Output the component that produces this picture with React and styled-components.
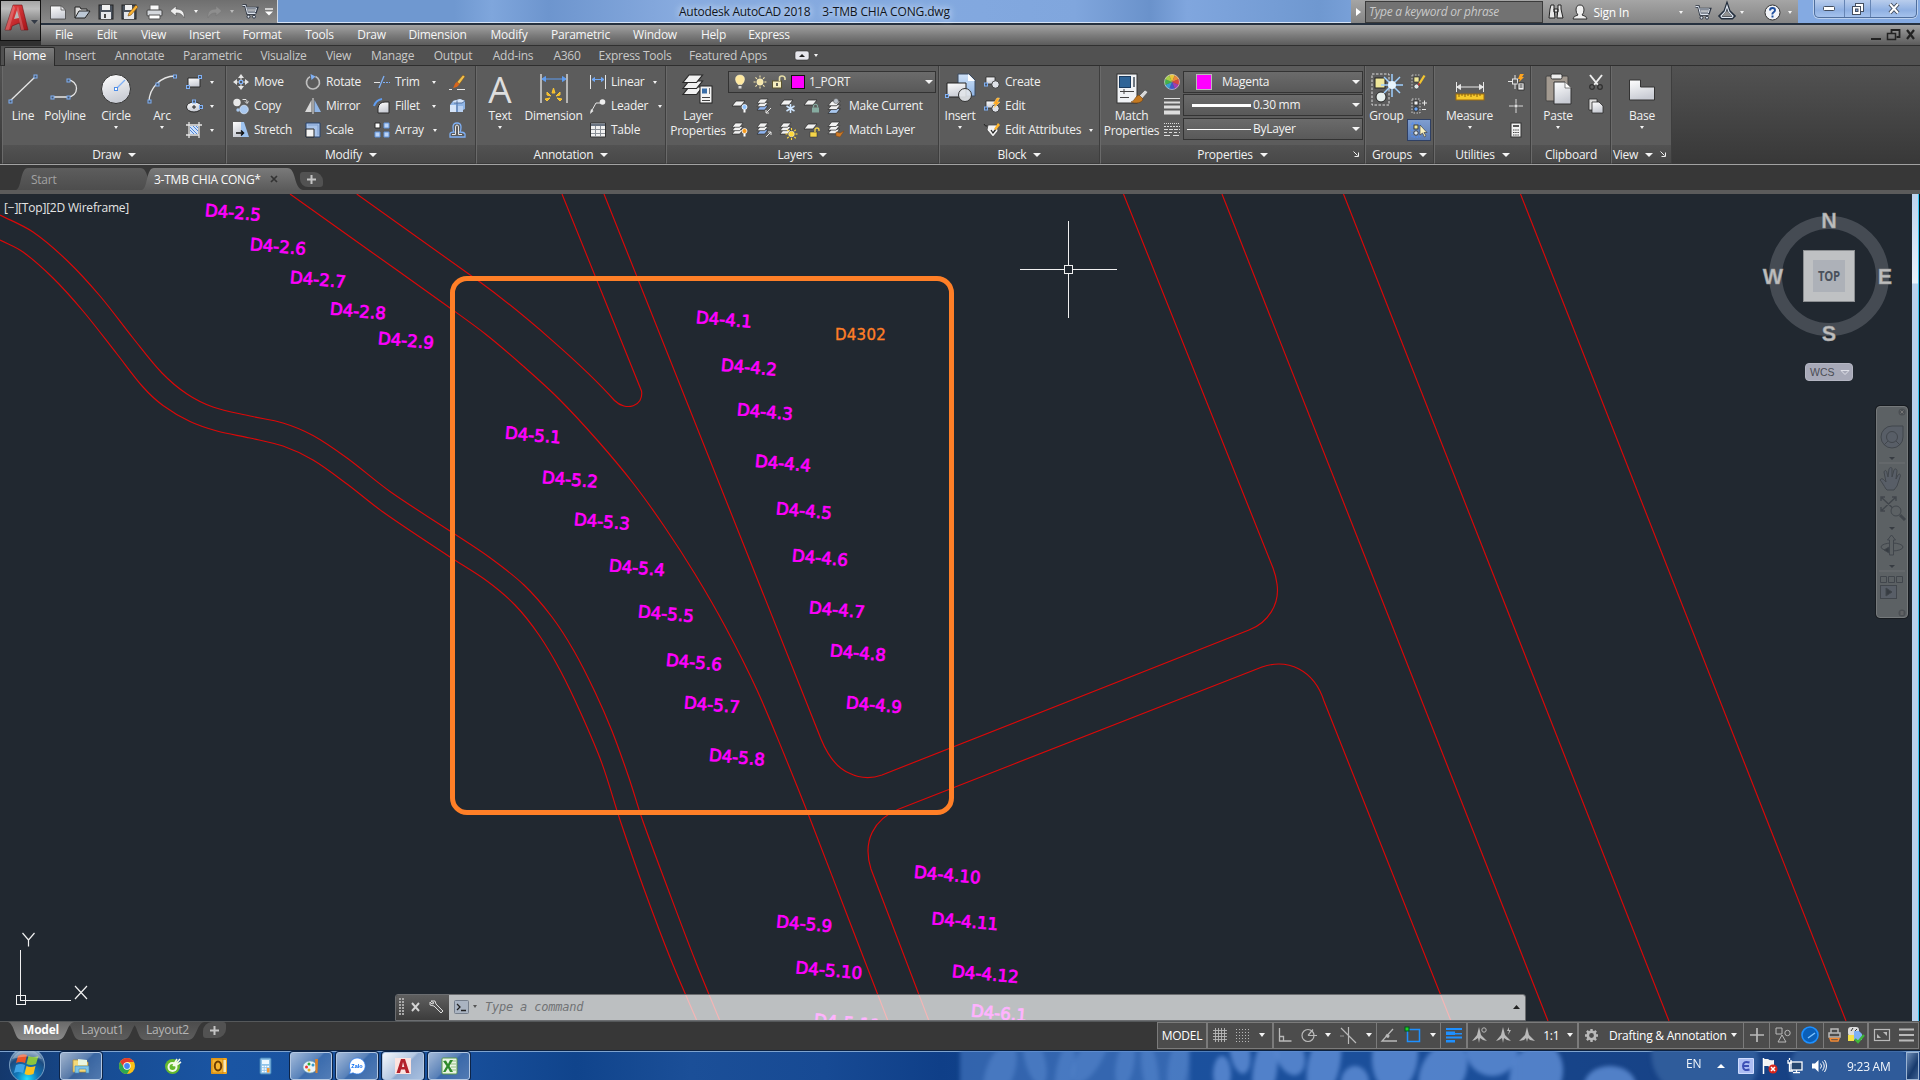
import React from 'react';
import styled, { createGlobalStyle, css } from 'styled-components';

const Global = createGlobalStyle`
  html, body { margin: 0; padding: 0; overflow: hidden; background: #373737; }
  * { box-sizing: border-box; }
  body { font-family: "Open Sans", "Noto Sans", sans-serif; font-size: 12px; letter-spacing: -0.25px; color: #eee; }
  svg { display: block; flex: none; overflow: visible; }
`;

/* ---------- shared ---------- */
const Screen = styled.div`
  width: 1920px; height: 1080px; overflow: hidden;
  display: flex; flex-direction: column; white-space: nowrap;
`;
const Caret = styled.i`
  width: 0; height: 0; flex: none;
  border-left: ${p => p.$s || 2.5}px solid transparent;
  border-right: ${p => p.$s || 2.5}px solid transparent;
  border-top: ${p => (p.$s || 2.5) + 0.5}px solid ${p => p.$c || '#f4f4f4'};
  margin-left: ${p => p.$ml || 0}px;
`;
const Spacer = styled.div`flex: ${p => (p.$w ? 'none' : 1)}; width: ${p => p.$w || 0}px;`;
const Svg = ({ w = 16, h = 16, children, ...r }) => (
  <svg width={w} height={h} viewBox={`0 0 ${w} ${h}`} fill="none" {...r}>{children}</svg>
);
const DefsSvg = styled.svg`position: absolute;`;
const Defs = () => (
  <DefsSvg width="0" height="0">
    <defs>
      <linearGradient id="wh" x1="0" y1="0" x2="0.3" y2="1"><stop offset="0" stopColor="#fff" /><stop offset="1" stopColor="#c9ccd4" /></linearGradient>
      <linearGradient id="bl" x1="0" y1="0" x2="0" y2="1"><stop offset="0" stopColor="#cfe2f8" /><stop offset="1" stopColor="#8fb4e4" /></linearGradient>
      <linearGradient id="rd" x1="0" y1="0" x2="1" y2="1"><stop offset="0" stopColor="#f04a4a" /><stop offset="1" stopColor="#a41218" /></linearGradient>
      <radialGradient id="orb" cx="0.5" cy="0.9" r="0.9"><stop offset="0" stopColor="#1fe0ff" /><stop offset="0.35" stopColor="#1176b8" /><stop offset="0.7" stopColor="#1c4b80" /><stop offset="1" stopColor="#a8c4dc" /></radialGradient>
    </defs>
  </DefsSvg>
);

/* ---------- title + menu ---------- */
const Header = styled.header`
  display: grid; grid-template-columns: 41px 1fr; grid-template-rows: 25px 20px;
  height: 46px; flex: none; background: #303030;
`;
const AppButton = styled.div`
  grid-row: 1 / 3; width: 41px; height: 41px; border: 1px solid #111;
  background: linear-gradient(#a4a4a4, #bcbcbc 20%, #777 60%, #575757);
  display: flex; align-items: flex-start; padding: 2px 0 0 3px;
`;
const TitleBar = styled.div`
  display: flex; height: 25px; border-bottom: 2px solid #26313f;
  background: linear-gradient(90deg, #6f98d0 0, #6f98d0 22%, #7fa6dc 24%, #6d95ce 27%, #88abdf 34%, #82a8df 50%, #80a6dd 55%, #6a92cb 59%, #80a6de 61%, #6f98d0 68%, #84aae2 72%, #84aae2);
`;
const QuickAccess = styled.div`
  width: 237px; height: 23px; display: flex; align-items: center;
  background: linear-gradient(#6f6f6f, #8a8a8a); border-right: 1px solid #cfd8e4;
`;
const Slot = styled.span`
  width: ${p => p.$w}px; height: ${p => (p.$h ? p.$h + 'px' : 'auto')}; flex: none;
  display: flex; align-items: center; justify-content: center;
`;
const WindowTitle = styled.div`
  width: 1073px; padding: 2px 0 0 401px; display: flex; gap: 12px; line-height: 19px; color: #10151c;
  border-bottom: 1px solid #d5e2f4; text-shadow: 0 0 6px #d5e4f8, 0 0 8px #d5e4f8;
`;
const ProjectName = styled.span`letter-spacing: -0.15px;`;
const Info = styled.div`
  width: 447px; height: 23px; display: flex; align-items: center; padding-top: 1px;
  background: linear-gradient(#a5a5a5, #858585); color: #fff;
`;
const Search = styled.div`
  width: 180px; height: 22px; border: 1px solid #3b3b3b; background: #727272;
  color: #c9c9c9; font-style: italic; line-height: 20px; padding-left: 3px;
`;
const WinButtons = styled.div`
  width: 103px; height: 18px; margin-left: 16px; display: flex;
  border: 1px solid #4f6e9c; border-top: 0; border-radius: 0 0 5px 5px;
  background: linear-gradient(#b9cdec, #8fb0e2 60%, #a5c2ec);
  box-shadow: 0 0 0 1px #bcd1ef;
`;
const WinBtn = styled.span`
  width: ${p => p.$w}px; display: flex; align-items: center; justify-content: center;
  border-left: ${p => (p.$first ? 0 : 1)}px solid #6685b4;
`;
const MenuBar = styled.nav`
  display: flex; align-items: center; background: linear-gradient(#a3a3a3, #7d7d7d 50%, #5b5b5b);
  color: #f6f6f6; font-size: 12px; padding-left: 2px; line-height: 20px;
`;
const MenuItem = styled.span`width: ${p => p.$w}px; flex: none; text-align: center;`;

/* ---------- ribbon ---------- */
const Tabs = styled.div`
  height: 20px; flex: none; display: flex; background: #515151; border-bottom: 1px solid #2f2f2f; padding-left: 3px;
  color: #c9c9c9; border-left: 1px solid #2f2f2f;
`;
const Tab = styled.span`
  width: ${p => p.$w}px; flex: none; text-align: center; line-height: 17px; height: 19px; margin-top: 1px;
  ${p => p.$on && css`
    color: #fff; background: linear-gradient(#7c7c7c, #5c5c5c); border: 1px solid #2a2a2a; border-bottom: 0;
    border-radius: 2px 2px 0 0; line-height: 16px; height: 19px;
  `}
`;
const Ribbon = styled.section`
  height: 99px; flex: none; display: flex; background: linear-gradient(#525252, #383838);
  border-bottom: 1px solid #a2a2a2; padding-left: 2px;
`;
const Panel = styled.div`
  width: ${p => p.$w}px; flex: none; height: 98px; background: #5c5c5c;
  border-right: 1px solid #3e3e3e; border-left: 1px solid #6a6a6a; border-bottom: 1px solid #3a3a3a;
  display: flex; flex-direction: column;
`;
const PanelBody = styled.div`height: 79px; padding: 4px 0 0 ${p => p.$pl || 0}px; display: flex;`;
const PanelTitle = styled.div`
  height: 18px; display: flex; align-items: center; justify-content: center; gap: 7px; line-height: 19px;
  background: linear-gradient(#525252, #484848); color: #f2f2f2; position: relative; padding-top: 1px;
`;
const Launcher = styled.span`position: absolute; right: 5px; top: 6px;`;
const Big = styled.div`
  width: ${p => p.$w}px; flex: none; display: flex; flex-direction: column; align-items: center; color: #f0f0f0;
`;
const BigIcon = styled.div`height: 37px; display: flex; align-items: center; justify-content: center;`;
const BigLabel = styled.div`height: 15px; line-height: 17px; text-align: center; margin-bottom: ${p => p.$mb || 0}px;`;
const Col = styled.div`width: ${p => p.$w}px; flex: none; display: flex; flex-direction: column;`;
const Row = styled.div`
  height: ${p => p.$h || 24}px; flex: none; display: flex; align-items: center; gap: ${p => (p.$g === undefined ? 5 : p.$g)}px;
  color: #f0f0f0; line-height: 22px; padding-left: ${p => p.$pl || 0}px;
`;
const RowText = styled.span`margin-left: -3px;`;
const Combo = styled.div`
  width: ${p => p.$w}px; height: 22px; margin: ${p => p.$mt || 0}px 0 ${p => p.$mb || 0}px; flex: none;
  border: 1px solid #333; background: linear-gradient(#6b6b6b, #595959);
  display: flex; align-items: center; padding: 0 2px 0 0; line-height: 20px; color: #f2f2f2;
`;
const Swatch = styled.i`
  width: ${p => p.$s}px; height: ${p => p.$s}px; flex: none; background: #f0f; border: 1px solid ${p => p.$b};
  margin: 0 ${p => p.$mr}px 0 ${p => p.$ml}px;
`;
const LineSample = styled.i`height: ${p => p.$h}px; width: ${p => p.$w}px; background: #fff; margin: 0 2px 0 ${p => p.$ml}px;`;
const Toggle = styled.span`
  width: 24px; height: 22px; flex: none; display: flex; align-items: center; justify-content: center;
  ${p => p.$on && css`background: linear-gradient(#7f9ed0, #5d7db3); border: 1px solid #2f4064;`}
`;

/* ---------- document tabs ---------- */
const DocTabs = styled.div`
  height: 29px; flex: none; background: #373737; border-bottom: 4px solid #5b5b5b; padding: 3px 0 0 16px; display: flex;
`;
const DocTab = styled.div`
  width: ${p => p.$w}px; height: 22px; flex: none; margin-right: -14px; display: flex; align-items: center;
  padding-left: ${p => p.$pl}px; gap: 9px; color: ${p => (p.$on ? '#fafafa' : '#a2a2a2')};
  background: ${p => (p.$on ? 'linear-gradient(#7a7a7a,#5b5b5b)' : 'linear-gradient(#5d5d5d,#4d4d4d)')};
  clip-path: path('${p => `M0 22 C6 20 4 0 12 0 H${p.$w - 16} C${p.$w - 6} 0 ${p.$w - 10} 20 ${p.$w} 22 Z`}');
  z-index: ${p => (p.$on ? 2 : 1)};
`;
const PlusTab = styled.div`
  width: 23px; height: ${p => p.$h || 15}px; margin: ${p => p.$m}; display: flex; align-items: center; justify-content: center;
  background: #525252; border-radius: ${p => p.$r || '3px 9px 3px 8px'};
`;

/* ---------- drawing area ---------- */
const Canvas = styled.main`height: 827px; flex: none; position: relative; background: #212830; overflow: hidden;`;
const DrawingSvg = styled.svg`position: absolute; left: 0; top: 0;`;
const ViewLabel = styled.div`position: absolute; left: 4px; top: 5px; line-height: 18px; color: #e4e4e4; letter-spacing: -0.2px;`;
const Frame = styled.div`
  position: absolute; left: 450px; top: 82px; width: 504px; height: 539px; border: 5px solid #ff7f27; border-radius: 17px;
`;
const FrameLabel = styled.span`
  position: absolute; left: 380px; top: 42px; font: 15px/24px "DejaVu Sans", sans-serif; letter-spacing: 0.25px; color: #ff7f27;
  -webkit-text-stroke: 0.35px #ff7f27;
`;
const EdgeStrip = styled.div`
  position: absolute; right: 0; top: 0; width: 8px; height: 827px;
  background: linear-gradient(#bcd3ef, #eaf2fc 89px, #b9d1ed 90px); border-right: 1px solid #0a0e14;
  box-shadow: inset -1px 0 0 #35c6f2;
`;
const Wcs = styled.div`
  position: absolute; left: 1805px; top: 169px; width: 48px; height: 18px; border-radius: 4px; background: #a7a9b8;
  border: 1px solid #b4b6c2; color: #4b4d55; font: 10.5px/15px "Liberation Sans", sans-serif; letter-spacing: 0;
  padding-left: 4px; display: flex; align-items: center; gap: 6px;
`;
const NavBar = styled.div`
  position: absolute; left: 1876px; top: 212px; width: 32px; height: 212px; border-radius: 4px; background: #5c6164;
  border: 1px solid #75797b; box-shadow: 0 0 0 1px #171b20;
`;
const CommandBar = styled.div`
  position: absolute; left: 395px; top: 800px; width: 1131px; height: 27px; display: flex;
  border: 1px solid #6b6d70; border-radius: 3px 3px 0 0; overflow: hidden;
`;
const CommandGrip = styled.div`width: 53px; background: linear-gradient(#5f5f5f, #3c3c3c); display: flex; align-items: center; padding: 0 0 2px 3px; gap: 6px;`;
const CommandInput = styled.div`
  flex: 1; background: rgba(255,255,255,.7); display: flex; align-items: center; padding: 0 5px 2px 5px;
  color: #717375; font: italic 12px/24px "DejaVu Sans Mono", monospace; letter-spacing: -0.2px;
`;

/* ---------- status bar ---------- */
const Bottom = styled.footer`height: 29px; flex: none; background: #373737; display: flex; border-top: 1px solid #55585a; padding-left: 8px;`;
const LayoutTab = styled.div`
  width: ${p => p.$w}px; height: 18px; margin-right: -8px; flex: none; text-align: center; line-height: 16px;
  color: ${p => (p.$on ? '#fff' : '#b5b5b5')}; font-weight: ${p => (p.$on ? 700 : 400)};
  background: ${p => (p.$on ? 'linear-gradient(#6a6a6a,#8a8a8a)' : 'linear-gradient(#4c4c4c,#5d5d5d)')};
  clip-path: path('${p => `M0 0 C7 2 6 18 14 18 H${p.$w - 16} C${p.$w - 7} 18 ${p.$w - 8} 2 ${p.$w} 0 Z`}');
  z-index: ${p => (p.$on ? 2 : 1)};
`;
const Status = styled.div`display: flex; height: 28px; background: #3a3a3a; color: #fff; padding-right: 2px; margin-left: -1px;`;
const Cell = styled.div`
  width: ${p => p.$w}px; height: 27px; flex: none; border: 1px solid #7b7b7b; background: #4c4c4c; margin-right: -1px;
  display: flex; align-items: center; justify-content: ${p => p.$j || 'space-around'};
  padding: 0 ${p => p.$p || 0}px 1px; gap: ${p => p.$g || 0}px;
`;

/* ---------- taskbar ---------- */
const Taskbar = styled.div`
  height: 30px; flex: none; position: relative; overflow: hidden; display: flex; border-top: 1px solid #0c2242;
  background: linear-gradient(90deg, #14386c, #174c93 5%, #1a55a3 12%, #184f9b 24%, #10448c 30%, #1b4f98 36%, #174a94 43%, #0f3f88 49%, #174a94 60%, #173f80);
  box-shadow: inset 0 1px 0 #7ea3cf;
`;
const Wallpaper = styled.svg`position: absolute; left: 0; top: 1px; filter: blur(2px);`;
const Orb = styled.div`width: 58px; flex: none; display: flex; padding: 0 0 0 9px; position: relative;`;
const TaskButton = styled.div`
  width: 42px; height: 28px; margin: 1px 2px 0; flex: none; display: flex; align-items: center; justify-content: center; border-radius: 3px;
  position: relative;
  ${p => p.$open && css`
    border: 1px solid #b4c8e2; box-shadow: 0 0 0 1px #0d2447;
    background: linear-gradient(135deg, rgba(255,255,255,.6), rgba(255,255,255,.28) 48%, rgba(255,255,255,.15) 52%, rgba(255,255,255,.25));
  `}
  ${p => p.$active && css`background: linear-gradient(135deg, #f4f7fb, #b5c8e2 50%, #8ea9d0 55%, #a9c0df);`}
`;
const Tray = styled.div`display: flex; align-items: center; position: relative; color: #f2f6fb; height: 29px;`;
const TrayText = styled.span`width: ${p => p.$w}px; padding: ${p => p.$pt || 0}px 0 ${p => p.$pb || 0}px; line-height: 20px;`;
const ShowDesktop = styled.div`
  width: 13px; height: 28px; margin-top: 1px; border: 1px solid #9bb4d3; background: linear-gradient(120deg, #6d8cb6, #173a6d 60%, #3c5f90);
`;

/* ---------- icon pieces ---------- */
const W = '#e6e6e6', B = '#7fb0f5', K = '#2b2b2b';
const Node = ({ x, y }) => <rect x={x - 1.5} y={y - 1.5} width="3" height="3" fill="#4a5666" stroke={B} />;
const CartIcon = ({ c = '#2c3442' }) => (
  <Svg w={16} h={15}>
    <path d="M0.5 1.5h3l2 8h8M4 4h11l-1.5 4.5H5.3" stroke={c} strokeWidth="2.6" />
    <path d="M0.5 1.5h3l2 8h8M4.5 4h10l-1.2 4H5.3M5 6h9" stroke="#dfe6f0" strokeWidth="1" />
    <circle cx="6.5" cy="12.7" r="1.5" fill="#dfe6f0" stroke={c} /><circle cx="12" cy="12.7" r="1.5" fill="#dfe6f0" stroke={c} />
  </Svg>
);
const Brush = ({ x = 0, y = 0 }) => (
  <g transform={`translate(${x} ${y})`}><path d="M13 0l2 1.500L9.500 9 7 7z" fill="#f2c04a" stroke="#7a4a10" strokeWidth=".5" /><path d="M7 7l2.500 2C8 12 6 12.500 3 13c1.500-2 1.500-5 4-6z" fill="#d8661c" /></g>
);
const Sheets = ({ x = 0, y = 0, s = 1, n = 3, fill = '#f2f2f2', mid }) => (
  <g transform={`translate(${x} ${y}) scale(${s})`}>
    {[...Array(n)].map((_, k) => {
      const i = n - 1 - k;
      return <path key={i} d={`M4 ${i * 4}h9l-4 5h-9z`} fill={mid && i === n - 1 ? mid : fill} stroke={K} strokeWidth=".8" />;
    })}
  </g>
);
const Sun = ({ x, y, r = 3, c = '#ffe27a' }) => (
  <g transform={`translate(${x} ${y})`}>
    <circle r={r} fill={c} stroke="#fff6c8" strokeWidth=".6" />
    {[...Array(8)].map((_, i) => <path key={i} d={`M0 ${-r - 1.2}v-2`} stroke={c} strokeWidth="1.1" transform={`rotate(${i * 45})`} />)}
  </g>
);
const Lock = ({ x, y, c = '#f5d54a' }) => (
  <g transform={`translate(${x} ${y})`}><rect x="0" y="4" width="7" height="5" fill={c} stroke={K} strokeWidth=".5" /><path d="M5 4V2q0-2 2-2t2 2v1" stroke={c} strokeWidth="1.3" /></g>
);

/* ---------- drawing geometry ---------- */
const smooth = pts => {
  const len = (a, b) => Math.hypot(b[0] - a[0], b[1] - a[1]);
  const tangents = pts.map((p, i) => {
    const a = pts[i - 1] || p, b = pts[i + 1] || p;
    const l = len(a, p) + len(p, b);
    return [(b[0] - a[0]) / l, (b[1] - a[1]) / l];
  });
  let d = `M${pts[0][0]} ${pts[0][1]}`;
  for (let i = 0; i < pts.length - 1; i++) {
    const p = pts[i], q = pts[i + 1], l = len(p, q) / 3, t = tangents[i], u = tangents[i + 1];
    d += `C${p[0] + t[0] * l} ${p[1] + t[1] * l} ${q[0] - u[0] * l} ${q[1] - u[1] * l} ${q[0]} ${q[1]}`;
  }
  return d;
};
const CURVES = [
  [[0, 215], [33, 232], [67, 260.5], [100, 296], [133, 338], [162, 373], [187, 394], [213, 407], [250, 416], [283, 423], [313, 435.5], [347, 458], [390, 491.5], [450, 531], [489, 557], [524, 585], [552, 617], [574, 651], [595, 692], [612, 731], [629, 778], [642.5, 820], [668, 889], [695, 960], [720, 1021]],
  [[0, 240], [23, 252], [53, 278], [83, 311], [117, 354], [143, 387], [163, 405.5], [190, 421.5], [217, 431], [250, 438], [283, 446], [313, 460], [347, 484], [383, 512], [450, 557], [487, 581], [515, 605], [539, 635], [560.5, 671], [581, 713.6], [602, 763.6], [620, 820], [644, 889], [671, 960], [697, 1021]],
  [[290, 194], [370, 251], [450, 308], [486, 334.5], [522, 365], [559, 399], [598, 441], [633, 483], [664, 526], [695, 574], [726, 628], [757, 690], [784, 754], [810.5, 820], [849, 920], [888, 1021]],
];
const PATHS = [
  'M356.700 194L480 282C520 311 585 367 614.500 400.500C626 412 644 406 641.500 391L639.700 386.500L562 194',
  'M604 194L821 739C828 756 837 768 849 773Q865 781 882 775L1249 630C1268 623 1280 604 1277 584Q1276 576 1273 568L1123.500 194',
  'M1222 194L1548 1021', 'M1343.500 194L1669 1021', 'M1520.500 194L1846 1021',
  'M1451 1021L1324 701C1314 670 1288 658 1262 667L899 809C874 819 862 841 871 869L929 1021',
];
const LABELS = [
  ['D4-4.1', 697, 323.6], ['D4-4.2', 722, 371.4], ['D4-4.3', 738, 416], ['D4-4.4', 756, 467.5], ['D4-4.5', 777, 515], ['D4-4.6', 793, 562],
  ['D4-4.7', 810, 614], ['D4-4.8', 831, 657], ['D4-4.9', 847, 709], ['D4-5.1', 506, 439.3], ['D4-5.2', 543, 483.6], ['D4-5.3', 575, 525.7],
  ['D4-5.4', 610, 572], ['D4-5.5', 639, 618], ['D4-5.6', 667, 666.4], ['D4-5.7', 685, 709], ['D4-5.8', 710, 761.4], ['D4-2.5', 206, 216.7],
  ['D4-2.6', 251, 250.7], ['D4-2.7', 291, 283.7], ['D4-2.8', 331, 315.3], ['D4-2.9', 379, 344.7], ['D4-5.9', 777.3, 928], ['D4-5.10', 796.5, 974],
  ['D4-5.11', 815, 1026.5], ['D4-4.10', 915, 878.5], ['D4-4.11', 932.5, 925], ['D4-4.12', 953, 977.7], ['D4-6.1', 972, 1017.3],
];

const Drawing = () => (
  <DrawingSvg width="1920" height="827" viewBox="0 194 1920 827" fill="none">
    <g stroke="#dc0808" strokeWidth="1.15">
      {CURVES.map((c, i) => <path key={i} d={smooth(c)} />)}
      {PATHS.map(d => <path key={d} d={d} />)}
    </g>
    <g fill="#ff00ff" stroke="#ff00ff" strokeWidth=".75" fontFamily="DejaVu Sans, sans-serif" fontSize="17" letterSpacing="0">
      {LABELS.map(([t, x, y]) => (
        <text key={t} transform={`translate(${x - 1.5} ${y - 0.7}) rotate(5)`} textLength={t.length > 6 ? 67 : 56} lengthAdjust="spacingAndGlyphs">{t}</text>
      ))}
    </g>
    <g stroke="#f0f0f0" shapeRendering="crispEdges">
      <path d="M1068.500 221v44M1068.500 274v44M1020 269.500h44M1073 269.500h44" />
      <rect x="1064.500" y="265.500" width="8" height="8" />
      <path d="M20.500 950v51M20.500 1000.500h50M16.500 995.500h9v9h-9z" />
    </g>
    <path d="M22.500 933l6 7 6-7M28.500 940v6.500M75 986l12 13M87 986l-12 13" stroke="#f0f0f0" strokeWidth="1.200" />
    <circle cx="1829" cy="276" r="53.500" stroke="#454b53" strokeWidth="13" />
    <rect x="1803.500" y="250.500" width="51" height="51" fill="#bfc1c3" stroke="#8b8e91" />
    <rect x="1813" y="260" width="32" height="32" fill="#adb1b8" />
    <text x="1829" y="281" textAnchor="middle" fill="#4a515c" fontFamily="Open Sans, sans-serif" fontWeight="700" fontSize="13.500" textLength="22" lengthAdjust="spacingAndGlyphs">TOP</text>
    <g fill="#bdbdbd" fontFamily="Liberation Sans, sans-serif" fontWeight="700" fontSize="21.500" textAnchor="middle" letterSpacing="0" stroke="#999" strokeWidth=".4">
      <text x="1829" y="228">N</text><text x="1829" y="341">S</text><text x="1773" y="284">W</text><text x="1885" y="284">E</text>
    </g>
  </DrawingSvg>
);

const NavIcons = () => (
  <Svg w={30} h={210} stroke="#41464c">
    <g strokeWidth="1">
      <circle cx="25" cy="5" r="3.500" fill="#4b4f53" stroke="none" /><path d="M23.500 3.500l3 3m0-3l-3 3" stroke="#777" />
      <path d="M15 19h11v11a11 11 0 1 1-11-11z" fill="#585e67" /><circle cx="15" cy="30" r="5.500" /><path d="M11 34l-4 4M19 34l4 4" />
      <path d="M12 50h6l-3 3z" fill="#373c42" stroke="none" /><path d="M2 56h26" stroke="#6c7073" />
      <path d="M9 82c-2-3-4-7-6-9 2-3 4 0 6 2L7 65c1-3 3-1 3 1l1 4 1-8c1-2 3-2 3 0v8l2-7c1-2 3-1 3 1l-1 8 2-4c2-2 3 0 2 2l-3 9-3 4h-7z" fill="#585e67" />
      <path d="M4 90l15 14M19 90L4 104M4 94v-4h4M15 90h4v4M4 100v4h4" strokeWidth="1.400" /><circle cx="19" cy="104" r="5" fill="#5c6164" /><path d="M23 108l5 5" strokeWidth="3" />
      <path d="M12 120h6l-3 3z" fill="#373c42" stroke="none" />
      <ellipse cx="15" cy="140" rx="11" ry="4" /><path d="M12.500 148v-15h-2l4-5 4 5h-2v15z" fill="#5c6164" /><path d="M7 143l5-3v6z" fill="#373c42" />
      <path d="M12 158h6l-3 3z" fill="#373c42" stroke="none" /><path d="M2 164h26" stroke="#6c7073" />
      <path d="M3.500 169.500h6v6h-6zM11.500 169.500h6v6h-6zM19.500 169.500h6v6h-6z" /><rect x="3.500" y="178.500" width="16" height="13" fill="#585e67" /><path d="M9 181l6 4-6 4z" fill="#373c42" />
      <circle cx="25" cy="206" r="3.500" fill="#4b4f53" stroke="none" /><path d="M23.500 205h3M23.500 207h3" stroke="#777" />
    </g>
  </Svg>
);

/* ---------- ribbon panels ---------- */
const BigButton = ({ w, icon, label, second, caret }) => (
  <Big $w={w}>
    <BigIcon>{icon}</BigIcon>
    <BigLabel $mb={caret ? 4 : 0}>{label}</BigLabel>
    {second && <BigLabel>{second}</BigLabel>}
    {caret && <Caret />}
  </Big>
);
const Tool = ({ icon, label, caret, ml, g }) => (
  <Row $g={g}><Slot $w={16}>{icon}</Slot>{label && <span>{label}</span>}{caret && <Caret $ml={ml} />}</Row>
);
const LaunchIcon = () => <Svg w={6} h={6}><path d="M0.500 0.500l4 4M5.500 1.500v4h-4" stroke="#eee" /></Svg>;
const Title = ({ text, caret = true, launch }) => (
  <PanelTitle><span>{text}</span>{caret && <Caret $s={4} />}{launch && <Launcher><LaunchIcon /></Launcher>}</PanelTitle>
);

const DrawPanel = () => (
  <Panel $w={224}>
    <PanelBody>
      <BigButton w={40} label="Line" icon={<Svg w={32} h={32}><path d="M3 28L28 4" stroke={W} strokeWidth="1.300" /><Node x={3.5} y={28.5} /><Node x={28.5} y={3.5} /></Svg>} />
      <BigButton w={44} label="Polyline" icon={<Svg w={32} h={32}><path d="M3 24h16a8.500 8.500 0 0 0 0-17" stroke={W} strokeWidth="1.300" /><Node x={3.5} y={24.5} /><Node x={19.5} y={24.5} /><Node x={19.5} y={7.5} /></Svg>} />
      <BigButton w={58} label="Circle" caret icon={<Svg w={32} h={32}><circle cx="16" cy="16" r="14.500" fill="url(#wh)" stroke="#333" /><path d="M16 16L25 7" stroke={B} strokeWidth="1.300" /><rect x="14.500" y="14.500" width="3" height="3" fill="#fff" stroke="#4f8fe8" /></Svg>} />
      <BigButton w={34} label="Arc" caret icon={<Svg w={32} h={32}><path d="M3 29C3 15 15 3 29 3" stroke={W} strokeWidth="1.300" /><Node x={3.5} y={28.5} /><Node x={11.5} y={11.5} /><Node x={29} y={3.5} /></Svg>} />
      <Spacer $w={7} />
      <Col $w={37}>
        <Tool g={8} caret icon={<Svg><path d="M2 4h12v9H2z" fill="url(#wh)" stroke={K} /><Node x={14} y={3} /><Node x={2} y={13} /></Svg>} />
        <Tool g={8} caret icon={<Svg><ellipse cx="8" cy="9" rx="7.500" ry="5" fill="url(#wh)" stroke={K} /><path d="M6 9h4M8 7v4" stroke="#222" /><Node x={8} y={3.5} /><Node x={15} y={9} /></Svg>} />
        <Tool g={8} caret icon={<Svg><path d="M0 3h16M0 13h13M3 0v16M13 0v16" stroke={W} strokeWidth="1.300" /><path d="M4 4h8v8H4z" fill="#cfe0f8" /><path d="M4 8l4 4M4 5l7 7M7 4l5 5M10 4l2 2" stroke="#4f86d8" /></Svg>} />
      </Col>
    </PanelBody>
    <Title text="Draw" />
  </Panel>
);

const ModifyPanel = () => (
  <Panel $w={250}>
    <PanelBody $pl={6}>
      <Col $w={72}>
        <Tool label="Move" icon={<Svg><path d="M8 0l3 4H5zM8 16l3-4H5zM0 8l4-3v6zM16 8l-4-3v6z" fill={W} /><path d="M8 4v8M4 8h8" stroke={W} /><Node x={8} y={8} /></Svg>} />
        <Tool label="Copy" icon={<Svg><circle cx="4" cy="4.500" r="3.700" fill="#e8e8e8" /><circle cx="11" cy="11.500" r="4.300" fill="#a9c8ef" stroke="#dce9fb" strokeWidth=".7" /><circle cx="5" cy="12" r="1.700" fill="#a9c8ef" /><path d="M9.500 1.500H13q1 0 1 3M12 3.500l2 2 1.500-2" stroke={W} /></Svg>} />
        <Tool label="Stretch" icon={<Svg><path d="M8 0h3l5 15H8z" fill="#9dc2ee" /><path d="M0 0h8v15H0z" fill="url(#wh)" /><path d="M3 11h7M8 8.500l2.500 2.500L8 13.500" stroke="#111" strokeWidth="1.500" /></Svg>} />
      </Col>
      <Col $w={69}>
        <Tool label="Rotate" icon={<Svg><path d="M10.500 2.500A6.500 6.500 0 1 1 5 2.700" stroke="#bfbfbf" strokeWidth="1.700" /><path d="M5.500 0l5 2.500-4 3.500z" fill={B} /></Svg>} />
        <Tool label="Mirror" icon={<Svg><path d="M8 0v16" stroke={W} /><path d="M6.500 2v12H0z" fill="#d8d8d8" /><path d="M9.500 2v12H16z" fill="#8fb4e4" /></Svg>} />
        <Tool label="Scale" icon={<Svg><path d="M1 1h14v14H1z" fill="#a9c4ea" stroke="#27436d" /><path d="M3 3h10v10" stroke="#7e9fd0" /><path d="M1 7h8v8H1z" fill="#f3f3f3" stroke={K} /></Svg>} />
      </Col>
      <Col $w={75}>
        <Tool label="Trim" caret ml={7} icon={<Svg><path d="M0 8.500h6" stroke={W} /><path d="M9 8.500h7" stroke={B} strokeDasharray="2 1" /><path d="M10 2L5 14" stroke={B} strokeWidth="1.300" /></Svg>} />
        <Tool label="Fillet" caret ml={7} icon={<Svg><path d="M4 15V10q1-6 7-6h4v11z" fill="url(#wh)" stroke={K} /><path d="M0 8Q2 2 8 1" stroke="#5f9cf0" strokeWidth="2" /></Svg>} />
        <Tool label="Array" caret ml={4} icon={<Svg><path d="M1 1h5v5H1z" fill="#fff" stroke={K} /><path d="M10 1h5v5h-5zM1 10h5v5H1zM10 10h5v5h-5z" fill="#bcd4f6" stroke="#5f93dc" /></Svg>} />
      </Col>
      <Col $w={20}>
        <Tool icon={<Svg><Brush x={1} y={1} /><path d="M0 15.500h3M8 15.500h8" stroke={W} /></Svg>} />
        <Tool icon={<Svg><path d="M4 3l7-2 5 2v8l-6 3H1V7z" fill="#8fb4e4" /><path d="M4 3l7-2 5 2-3 2H5zM1 7h6v7H1z" fill="#d5e4f8" /><path d="M9 8h5v6H9z" fill="#b7cff0" /><path d="M8 2.500v11.500M5 5h8l3-2" stroke="#4a6a9a" strokeWidth=".9" /></Svg>} />
        <Tool icon={<Svg><path d="M1 15h15v-3q-1-2-5-2 1-2 1-5 0-4-4-4T4 5q0 3 1 5-4 0-4 2z" stroke={B} strokeWidth="1.300" /><path d="M3 12.500h3.500V5q0-2 1.500-2t1.500 2v7.500H13" stroke={W} /></Svg>} />
      </Col>
    </PanelBody>
    <Title text="Modify" />
  </Panel>
);

const BigA = styled.span`font: 37px/36px "Open Sans", sans-serif; color: #dedede; letter-spacing: 0;`;

const AnnotationPanel = () => (
  <Panel $w={190}>
    <PanelBody $pl={1}>
      <BigButton w={44} label="Text" caret icon={<BigA>A</BigA>} />
      <BigButton w={63} label="Dimension" icon={<Svg w={32} h={32}><path d="M3 1v29M29 1v29" stroke={W} strokeWidth="1.300" /><path d="M4 6h24M4 6l3.500-2.500v5zM28 6l-3.500-2.500v5z" stroke="#5f9cf0" fill="#5f9cf0" /><path d="M15.500 15l1.500 5h-3zM9 19l4 4-4-1zM22 19l-4 4 4-1zM7 26l5-1-3 3zM24 26l-5-1 3 3z" fill="#fdb515" stroke="#f7c63a" /></Svg>} />
      <Spacer $w={5} />
      <Col $w={74}>
        <Tool label="Linear" caret ml={4} icon={<Svg><path d="M.5 1v14M15.500 1v14" stroke={W} /><path d="M2 5.500h12M2 5.500l2.500-2v4zM14 5.500l-2.500-2v4z" stroke="#6fa6f3" fill="#6fa6f3" /></Svg>} />
        <Tool label="Leader" caret ml={5} icon={<Svg><path d="M1 14L6 5h4" stroke={W} /><path d="M0 16l1-5 2.500 2z" fill={W} /><circle cx="12.500" cy="4" r="2.800" fill="#eee" /></Svg>} />
        <Tool label="Table" icon={<Svg><path d="M.5 1h15v14H.5z" fill="#f0f0f0" stroke="#333" /><path d="M1 1.500h14v2.500H1z" fill="#6a7482" /><path d="M1 7.500h14M1 11.500h14M5.500 4v11M10.500 4v11" stroke="#8a8f96" /></Svg>} />
      </Col>
    </PanelBody>
    <Title text="Annotation" />
  </Panel>
);

const LayerIcons = ({ second }) => (
  <>
    <Slot $w={16}><Svg><Sheets y={second ? 1 : 3} s={second ? 0.85 : 1} n={second ? 3 : 1} /><circle cx="12.500" cy="9" r="2.500" fill={second ? '#f79a1c' : '#8fc3ff'} stroke="#fff" strokeWidth=".8" /><path d="M12.500 11.500v3" stroke="#fff" strokeWidth="2" /></Svg></Slot>
    <Slot $w={16}><Svg><Sheets x={1} y={1} s={0.85} mid="#8fb4ef" /><path d={second ? 'M10 15l5-5M12 10h3v3' : 'M15 10l-5 5M10 12v3h3'} stroke={W} /></Svg></Slot>
    <Slot $w={16}><Svg><Sheets y={second ? 1 : 2} s={second ? 0.85 : 1} n={second ? 3 : 1} />{second ? <Sun x={11.5} y={12} r={2.8} c="#ffd83a" /> : <path d="M10.500 6v9M6.500 8l8 5M14.500 8l-8 5" stroke="#cfe6ff" strokeWidth="1.500" />}</Svg></Slot>
    <Slot $w={16}><Svg><Sheets y={2} n={1} />{second ? <Lock x={6} y={6} /> : <><rect x="8" y="9.500" width="7" height="5" fill="#86aca0" /><path d="M9.500 9.500v-2q2-2.500 4 0v2" stroke="#86aca0" strokeWidth="1.200" /></>}</Svg></Slot>
    <Slot $w={16}><Svg>{second ? <><Sheets x={0} y={0} s={0.9} /><path d="M8 10l4 1 4-2-4 6-4-1z" fill="#d07c28" stroke="#7c4510" strokeWidth=".5" /></> : <><Sheets y={3} n={3} s={0.95} mid="#a9c8ef" /><circle cx="8" cy="3" r="2.500" fill="#b8bfc8" stroke="#555" strokeWidth=".5" /></>}</Svg></Slot>
  </>
);

const LayersPanel = () => (
  <Panel $w={273}>
    <PanelBody $pl={1}>
      <BigButton w={60} label="Layer" second="Properties" icon={<Svg w={32} h={32}><Sheets x={1} y={2} s={1.5} n={3} /><rect x="18" y="13" width="12" height="17" fill="#f4f4f4" stroke="#222" /><path d="M20 15.500h5v5h-5z" fill="#3a6ea8" /><path d="M27.500 15v6" stroke="#777" /><path d="M20 24.500h8M20 27.500h8" stroke="#444" /></Svg>} />
      <Col $w={210}>
        <Combo $w={208} $mt={1} $mb={1}>
          <Spacer $w={2} />
          <Slot $w={18}><Svg w={12} h={16}><path d="M6 1q4.500 0 4.500 4.500Q10.500 8 8 10.500H4Q1.500 8 1.500 5.500 1.500 1 6 1z" fill="#ffe9a0" stroke="#fff5cc" strokeWidth=".5" /><path d="M4.500 12h3v2.500h-3z" fill="#d8d8d8" /></Svg></Slot>
          <Slot $w={21}><Svg><Sun x={8} y={8} r={3.2} c="#f5e6ab" /></Svg></Slot>
          <Slot $w={18}><Svg w={14} h={14}><rect x=".5" y="6" width="9" height="7" fill="#f6eec0" stroke="#5a5330" /><path d="M5 8v3" stroke="#333" strokeWidth="1.500" /><path d="M7.500 6V3q0-2 2.500-2t3 2v2" stroke="#e8dfa8" strokeWidth="1.600" /></Svg></Slot>
          <Swatch $s={14} $b="#111" $ml={3} $mr={4} />1_PORT<Spacer /><Caret $s={4} />
        </Combo>
        <Row $g={8} $pl={4}><LayerIcons /><RowText>Make Current</RowText></Row>
        <Row $g={8} $pl={4}><LayerIcons second /><RowText>Match Layer</RowText></Row>
      </Col>
    </PanelBody>
    <Title text="Layers" />
  </Panel>
);

const BlockShape = () => <><path d="M2 3h9v7H2z" fill="url(#wh)" stroke={K} strokeWidth=".8" /><circle cx="11.500" cy="10.500" r="3.700" fill="#dfe2e8" stroke={K} strokeWidth=".8" /><Node x={2} y={10.5} /></>;

const BlockPanel = () => (
  <Panel $w={161}>
    <PanelBody>
      <BigButton w={40} label="Insert" caret icon={<Svg w={32} h={32}><path d="M14 1h11l6 6v16H14z" fill="url(#bl)" stroke="#3a4a60" /><path d="M24 1v7h7z" fill="#fff" /><path d="M3 10h19v14H3z" fill="url(#wh)" stroke="#222" /><circle cx="21" cy="22" r="6.500" fill="#e2e5ea" fillOpacity=".9" stroke="#333" /><Node x={3} y={23} /></Svg>} />
      <Spacer $w={4} />
      <Col $w={112}>
        <Tool label="Create" icon={<Svg><BlockShape /></Svg>} />
        <Tool label="Edit" icon={<Svg><BlockShape /><path d="M13 0L9 6h2.500L10 10l6-6h-2.500l2-4z" fill="#ffa51f" stroke="#ffe08a" strokeWidth=".5" /></Svg>} />
        <Tool label="Edit Attributes" caret ml={3} icon={<Svg><path d="M0 2q1 3 4 2" stroke="#222" /><path d="M4 3h9l1 6-5 6-6-7z" fill="#f2f2f2" stroke="#444" strokeWidth=".8" /><path d="M7 8l2 3 3-4" stroke="#222" strokeWidth="1.300" /><path d="M14 1l2 2-4 5-2-1z" fill="#ffb52b" /></Svg>} />
      </Col>
    </PanelBody>
    <Title text="Block" />
  </Panel>
);

const WHEEL = ['#e9c63a', '#e98a3a', '#d8453f', '#a23bb0', '#4057c8', '#3a9fd0', '#45b04a', '#a7cf45'];
const PropertiesPanel = () => (
  <Panel $w={265}>
    <PanelBody $pl={1}>
      <BigButton w={59} label="Match" second="Properties" icon={<Svg w={32} h={32}><rect x="1" y="1" width="20" height="29" fill="#f0f2f5" stroke="#333" /><rect x="3.500" y="3.500" width="11" height="11" fill="#2f6497" stroke="#1b3c60" /><path d="M18 4v10" stroke="#6d7680" strokeWidth="2" /><path d="M4 18.500h14M8 16v5M4 24.500h9" stroke="#444" /><path d="M29 17l3 2-6 7-3-3z" fill="#d8d8d8" stroke="#444" strokeWidth=".6" /><path d="M23 22l4 4c-1 4-7 5-12 3 4-1 4-6 8-7z" fill="#c47a22" stroke="#6e3e0c" strokeWidth=".6" /></Svg>} />
      <Spacer $w={3} />
      <Col $w={19}>
        <Tool icon={<Svg>{WHEEL.map((c, i) => <path key={c} d="M8 8L5.100 0.900A7.700 7.700 0 0 1 10.900 0.900z" fill={c} transform={`rotate(${i * 45} 8 8)`} />)}<circle cx="8" cy="8" r="7.500" stroke="#ddd" strokeWidth=".6" /></Svg>} />
        <Tool icon={<Svg><path d="M0 .5h16" stroke="#ddd" /><path d="M0 4.500h16" stroke="#ddd" strokeWidth="2" /><path d="M0 9h16" stroke="#ddd" strokeWidth="3" /><path d="M0 14.500h16" stroke="#ddd" strokeWidth="4" /></Svg>} />
        <Tool icon={<Svg><g stroke="#ddd"><path d="M0 1.500h16" strokeDasharray="1 1" /><path d="M0 4.500h16" strokeDasharray="2 1" /><path d="M0 7.500h16" strokeDasharray="4 1" /><path d="M0 10.500h16" strokeDasharray="3 2" /><path d="M0 13.500h16" strokeDasharray="6 3" /></g></Svg>} />
      </Col>
      <Col $w={180}>
        <Combo $w={180} $mt={1} $mb={1}><Swatch $s={16} $b="#bbb" $ml={12} $mr={10} />Magenta<Spacer /><Caret $s={4} /></Combo>
        <Combo $w={180} $mb={2}><LineSample $h={3} $w={59} $ml={8} />0.30 mm<Spacer /><Caret $s={4} /></Combo>
        <Combo $w={180}><LineSample $h={1} $w={64} $ml={3} />ByLayer<Spacer /><Caret $s={4} /></Combo>
      </Col>
    </PanelBody>
    <Title text="Properties" launch />
  </Panel>
);

const GroupsPanel = () => (
  <Panel $w={69}>
    <PanelBody $pl={0}>
      <BigButton w={41} label="Group" icon={<Svg w={32} h={32}><path d="M1 1h17v31H1z" stroke="#ddd" strokeDasharray="2.500 1.500" /><rect x="4" y="5" width="10" height="10" fill="#efe79a" stroke="#222" /><circle cx="10" cy="24" r="5" fill="#e8f0ee" stroke="#222" /><path d="M12 21l9-9" stroke={W} /><g stroke="#9fd0ff" strokeWidth="1.500"><path d="M21 1v23M10 12h22M13 4l16 16M29 4L13 20" /></g><circle cx="21" cy="12" r="4" fill="#e8f6ff" /></Svg>} />
      <Col $w={24}>
        <Row $g={0}><Toggle><Svg><path d="M1 1h8M1 1v14" stroke="#bbb" strokeDasharray="1.500 1.500" /><rect x="3" y="3" width="5" height="5" fill="#efe79a" stroke="#222" strokeWidth=".6" /><circle cx="5.500" cy="12.500" r="2.500" fill="#dfe8e8" stroke="#222" strokeWidth=".6" /><path d="M14.500 2l-5 8-2-1 5-8z" fill="#f2c530" /><path d="M9.500 10l-2.500 2 .5-3z" fill="#e03030" /></Svg></Toggle></Row>
        <Row $g={0}><Toggle><Svg><path d="M1 1h8v14H1z" stroke="#ccc" strokeDasharray="1.500 1.500" /><rect x="3" y="3" width="4" height="4" fill="#f0f0f0" stroke="#222" strokeWidth=".8" /><circle cx="5" cy="11" r="2.200" fill="#6fa6f3" stroke="#222" strokeWidth=".8" /><path d="M11 5h5M13.500 2.500v5M11 11.500h4" stroke={W} /></Svg></Toggle></Row>
        <Row $g={0}><Toggle $on><Svg><path d="M1 1h8v14H1z" stroke="#4a8bff" strokeDasharray="1.500 1.500" /><rect x="3" y="3" width="4" height="4" fill="#efe79a" stroke="#222" strokeWidth=".8" /><circle cx="5" cy="11" r="2.200" fill="#dfe8f0" stroke="#222" strokeWidth=".8" /><path d="M9 3v10l2.500-2 2 4 1.500-1-2-3.500h3z" fill="#fbf3c0" stroke="#333" strokeWidth=".6" /></Svg></Toggle></Row>
      </Col>
    </PanelBody>
    <Title text="Groups" />
  </Panel>
);

const UtilitiesPanel = () => (
  <Panel $w={97}>
    <PanelBody>
      <BigButton w={69} label="Measure" caret icon={<Svg w={32} h={32}><path d="M2.500 9v10M29.500 9v10M3 14h26M3 14l3.500-2.500v5zM29 14l-3.500-2.500v5z" stroke={W} fill={W} /><rect x="2" y="21" width="28" height="6" fill="#f5c82c" stroke="#9a6a10" /><path d="M5 21v3M8 21v2M11 21v3M14 21v2M17 21v3M20 21v2M23 21v3M26 21v2" stroke="#6e4a08" strokeWidth=".8" /></Svg>} />
      <Spacer $w={4} />
      <Col $w={20}>
        <Tool icon={<Svg><path d="M7 1v14M0 7.500h10" stroke={W} /><rect x="4.500" y="5" width="5" height="5" fill="#5c5c5c" stroke={W} /><path d="M12 0l-2 5h2l-1 3 5-5h-2l2-3z" fill="#ffa51f" /><rect x="10" y="9" width="6" height="7" fill="#f0f0f0" stroke="#222" strokeWidth=".7" /><path d="M11.500 11h3M11.500 13h3" stroke="#333" /></Svg>} />
        <Tool icon={<Svg><path d="M8 1v14M1 8h14" stroke="#d8d8d8" /><circle cx="8" cy="8" r="2" fill="#ddd" stroke="#444" strokeWidth=".6" /></Svg>} />
        <Tool icon={<Svg><rect x="3" y="1" width="10" height="14" fill="#f2f2f2" stroke="#333" /><path d="M5 4h6" stroke="#555" strokeWidth="2" /><path d="M5 8h6M5 10.500h6M5 13h6" stroke="#444" strokeDasharray="1.500 .7" /></Svg>} />
      </Col>
    </PanelBody>
    <Title text="Utilities" />
  </Panel>
);

const ClipboardPanel = () => (
  <Panel $w={80}>
    <PanelBody>
      <BigButton w={52} label="Paste" caret icon={<Svg w={32} h={32}><rect x="4" y="3" width="22" height="25" rx="1" fill="#a39a90" stroke="#444" /><rect x="9" y="1" width="11" height="5" rx="1.500" fill="#eee" stroke="#333" /><path d="M12 9h11l6 6v16H12z" fill="url(#wh)" stroke="#333" /><path d="M23 9v6h6" fill="#fff" stroke="#555" strokeWidth=".7" /></Svg>} />
      <Spacer $w={4} />
      <Col $w={20}>
        <Tool icon={<Svg><path d="M2 1l8 10M14 1L6 11" stroke="#eee" strokeWidth="2" /><circle cx="4" cy="13" r="2.300" stroke="#303030" strokeWidth="1.300" /><circle cx="12" cy="13" r="2.300" stroke="#303030" strokeWidth="1.300" /></Svg>} />
        <Tool icon={<Svg><path d="M1 1h8v11H1z" fill="#ddd" stroke={K} strokeWidth=".8" /><path d="M4 4h7l4 4v7H4z" fill="url(#wh)" stroke={K} strokeWidth=".8" /></Svg>} />
      </Col>
    </PanelBody>
    <Title text="Clipboard" caret={false} />
  </Panel>
);

const ViewPanel = () => (
  <Panel $w={61}>
    <PanelBody>
      <BigButton w={60} label="Base" caret icon={<Svg w={32} h={32}><path d="M3.500 7h11v7h14v13h-25z" fill="url(#wh)" stroke="#333" /></Svg>} />
    </PanelBody>
    <PanelTitle><span>View</span><Caret $s={4} /><Spacer $w={10} /><Launcher><LaunchIcon /></Launcher></PanelTitle>
  </Panel>
);

/* ---------- bars ---------- */
const MENU = [['File', 42], ['Edit', 44], ['View', 49], ['Insert', 53], ['Format', 62], ['Tools', 53], ['Draw', 51], ['Dimension', 81], ['Modify', 62], ['Parametric', 81], ['Window', 68], ['Help', 49], ['Express', 62]];
const TABS = [['Home', 51], ['Insert', 50], ['Annotate', 69], ['Parametric', 77], ['Visualize', 65], ['View', 45], ['Manage', 63], ['Output', 58], ['Add-ins', 62], ['A360', 46], ['Express Tools', 90], ['Featured Apps', 96]];

const Top = () => (
  <Header>
    <AppButton>
      <Svg w={34} h={32}><path d="M1 27L9 2h9l6 25h-7l-1.500-7L8 23l-1 4z" fill="url(#rd)" stroke="#6e0f12" strokeWidth=".6" /><path d="M10 16l3-9 2 8z" fill="#b9b9b9" /><path d="M9 2l2 3L5 27H1zM14 3l6 24h-3L13 6z" fill="#fff" fillOpacity=".2" /><path d="M27 17h7l-3.500 4z" fill="#333a46" /></Svg>
    </AppButton>
    <TitleBar>
      <QuickAccess>
        <Spacer $w={5} />
        <Slot $w={24}><Svg><path d="M.5 2h11l4 4v9H.5z" fill="url(#wh)" stroke="#444" strokeWidth=".8" /><path d="M11 2v4h4" stroke="#555" strokeWidth=".8" /></Svg></Slot>
        <Slot $w={24}><Svg><path d="M1 14V3h5l1 2h6v3" fill="#ddd" stroke="#222" /><path d="M1 14l4-7h11l-5 7z" fill="#bcc7d4" stroke="#222" /></Svg></Slot>
        <Slot $w={24}><Svg><rect x="1" y="1" width="14" height="14" fill="#4b535e" stroke="#222" /><rect x="4" y="1" width="8" height="5" fill="#f0f0f0" /><rect x="3" y="8" width="10" height="7" fill="#e4e6ea" /><path d="M6 10v4h2v-4z" fill="#444" /></Svg></Slot>
        <Slot $w={24}><Svg><rect x="0" y="1" width="14" height="14" fill="#4b535e" stroke="#222" /><rect x="3" y="1" width="7" height="5" fill="#f0f0f0" /><rect x="2" y="8" width="10" height="7" fill="#e4e6ea" /><path d="M14 1l2 2-7 8-3 1 1-3z" fill="#f9b233" stroke="#7c4f10" strokeWidth=".6" /></Svg></Slot>
        <Slot $w={24}><Svg><path d="M4 1h9v6H4z" fill="#f8f8f8" stroke="#666" /><rect x="1" y="6" width="15" height="6" rx="1" fill="#d5d8dd" stroke="#444" /><path d="M3 11h11v4H3z" fill="#fff" stroke="#555" /></Svg></Slot>
        <Slot $w={24}><Svg><path d="M0 7l6-5v3c6 0 9 3 8 9-2-4-4-5-8-5v3z" fill="#eee" stroke="#555" strokeWidth=".6" /></Svg></Slot>
        <Slot $w={12}><Caret /></Slot>
        <Slot $w={24}><Svg><path d="M16 7l-6-5v3c-6 0-9 3-8 9 2-4 4-5 8-5v3z" fill="#8e8e8e" stroke="#777" strokeWidth=".6" /></Svg></Slot>
        <Slot $w={12}><Caret $c="#bbb" /></Slot>
        <Slot $w={24}><CartIcon /></Slot>
        <Slot $w={14}><Svg w={8} h={8}><path d="M0 1h8" stroke="#fff" strokeWidth="1.300" /><path d="M0 3.500h8l-4 4z" fill="#fff" /></Svg></Slot>
      </QuickAccess>
      <WindowTitle><span>Autodesk AutoCAD 2018</span><ProjectName>3-TMB CHIA CONG.dwg</ProjectName></WindowTitle>
      <Info>
        <Slot $w={14}><Svg w={5} h={8}><path d="M0 0l5 4-5 4z" fill="#fff" /></Svg></Slot>
        <Search>Type a keyword or phrase</Search>
        <Spacer $w={1} />
        <Slot $w={24}><Svg><path d="M3 1h3v4l1 9H1l1-9zM10 1h3v4l2 9H9l1-9zM6 5h4v3H6z" fill="#e8e8e8" stroke="#222" /></Svg></Slot>
        <Slot $w={24}><Svg><path d="M1 15q0-3 5-4-2-2-2-5 0-5 4-5t4 5q0 3-2 5 5 1 5 4z" fill="#f0f0f0" stroke="#333" /></Svg></Slot>
        <Spacer $w={1} />
        <span>Sign In</span>
        <Spacer $w={48} /><Slot $w={8}><Caret /></Slot>
        <Spacer $w={10} /><CartIcon /><Spacer $w={8} />
        <Svg><path d="M8 1l2 6 5 5-2 2H3l-2-2 5-5z" stroke="#222d3c" strokeWidth="3" /><path d="M8 2l2 6 4 4-1 1.500H3L2 12l4-4z" stroke="#dfe6f0" strokeWidth="1.200" /></Svg>
        <Slot $w={14}><Caret /></Slot><Spacer $w={15} />
        <Svg w={17} h={17}><circle cx="8.500" cy="8.500" r="7.500" fill="#f2f4f8" stroke="#333" /><path d="M6 6.500q0-2.500 2.500-2.500T11 6.300q0 1.200-1.500 2T8.500 10.500" stroke="#1f4f9e" strokeWidth="1.900" /><rect x="7.500" y="11.500" width="2" height="2" fill="#1f4f9e" /></Svg>
        <Slot $w={17}><Caret /></Slot>
      </Info>
      <WinButtons>
        <WinBtn $w={29} $first><Svg w={12} h={5}><rect x=".5" y=".5" width="11" height="4" rx="1" fill="#fff" stroke="#444f60" /></Svg></WinBtn>
        <WinBtn $w={27}><Svg w={12} h={12}><rect x="3.500" y=".5" width="8" height="8" fill="#fff" stroke="#444f60" /><rect x=".5" y="3.500" width="8" height="8" fill="#fff" stroke="#444f60" /><rect x="3.500" y="6" width="2.500" height="2.500" fill="#7b9bd0" stroke="#444f60" /></Svg></WinBtn>
        <WinBtn $w={46}><Svg w={12} h={11}><path d="M2 1l8 9M10 1l-8 9" stroke="#444f60" strokeWidth="4" /><path d="M2 1l8 9M10 1l-8 9" stroke="#fff" strokeWidth="2" /></Svg></WinBtn>
      </WinButtons>
    </TitleBar>
    <MenuBar>
      {MENU.map(([t, w]) => <MenuItem key={t} $w={w}>{t}</MenuItem>)}
      <Spacer />
      <Svg w={49} h={14}><path d="M0 11h10" stroke="#222" strokeWidth="2" /><path d="M20.500 5V2h8v7h-3" stroke="#222" strokeWidth="1.800" /><path d="M16.500 5.500h8v6h-8z" stroke="#222" strokeWidth="1.500" /><path d="M36 2l7 9M43 2l-7 9" stroke="#222" strokeWidth="2.200" /></Svg>
    </MenuBar>
  </Header>
);

const StatusBar = () => {
  const g = '#b9b9b9', b = '#1e90ff';
  return (
    <Status>
      <Cell $w={50}>MODEL</Cell><Spacer $w={1} />
      <Cell $w={66} $j="flex-start" $p={5} $g={9}>
        <Svg w={14} h={14} stroke={g}><path d="M2.500 0v14M5.500 0v14M8.500 0v14M11.500 0v14M0 2.500h14M0 5.500h14M0 8.500h14M0 11.500h14" strokeWidth=".9" /></Svg>
        <Svg w={14} h={14} stroke={g}>{[1.5, 4.5, 7.5, 10.5, 13.5].map(y => <path key={y} d={`M0 ${y}h14`} strokeDasharray="1 2" />)}</Svg>
        <Caret $s={3.5} />
      </Cell><Spacer $w={1} />
      <Cell $w={104}>
        <Svg w={14} h={14} stroke={g}><path d="M1.500 0v13h12M1.500 8.500h4v4" strokeWidth="1.300" /></Svg>
        <Svg stroke={g}><circle cx="7" cy="8.500" r="6" strokeWidth="1.200" /><path d="M7 8.500h9M7 8.500l5-6" strokeWidth="1.200" /></Svg>
        <Caret $s={3.5} />
        <Svg w={17} h={17} stroke={g}><path d="M1 1l15 15M8.500 0v17" strokeWidth="1.200" /><path d="M0 9h4" strokeWidth=".7" /></Svg>
        <Caret $s={3.5} />
      </Cell>
      <Cell $w={65}>
        <Svg stroke={g}><path d="M12 2L1 14h15" strokeWidth="1.300" /><path d="M5 8l3 2" strokeWidth="3" /></Svg>
        <Svg stroke={b}><path d="M2.500 2.500h12v12h-12z" strokeWidth="1.500" /><rect x="0" y="0" width="4" height="4" fill="#1ed41e" stroke="#052" /></Svg>
        <Caret $s={3.5} />
      </Cell>
      <Cell $w={27}><Svg><path d="M0 1h16v2H0zM0 4.500h9V8H0zM9 6h7v1.500H9zM0 9.500h16v2H0zM0 13h9v2.500H0z" fill={b} /></Svg></Cell><Spacer $w={1} />
      <Cell $w={111}>
        <Svg><path d="M7 0l2 8 6 6-4-1-3-2-1 5-1-5-3 2-3 1 5-6z" fill={g} /><circle cx="12" cy="3" r="2.200" stroke={g} fill="none" /></Svg>
        <Svg><path d="M7 0l2 8 6 6-4-1-3-2-1 5-1-5-3 2-3 1 5-6z" fill={g} /><path d="M13 0l-2 4h2l-1 4 3-5h-2z" fill={g} /></Svg>
        <Svg><path d="M8 0l2 8 6 6-5-1-2-2-1 4-1-4-2 2-5 1 6-6z" fill={g} /></Svg>
        <span>1:1</span><Caret $s={3.5} />
      </Cell><Spacer $w={1} />
      <Cell $w={166} $j="flex-start" $p={6}>
        <Svg w={13} h={13}><circle cx="6.500" cy="6.500" r="3.700" stroke={g} strokeWidth="2.600" />{[0, 45, 90, 135].map(a => <path key={a} d="M6.500 0v2.500M6.500 10.500V13" stroke={g} strokeWidth="2.400" transform={`rotate(${a} 6.5 6.5)`} />)}</Svg>
        <Spacer $w={11} /><span>Drafting &amp; Annotation</span><Spacer /><Caret $s={3.5} />
      </Cell>
      <Cell $w={27}><Svg w={14} h={14}><path d="M7 0v14M0 7h14" stroke={g} strokeWidth="1.700" /></Svg></Cell>
      <Cell $w={28}><Svg stroke={g}><path d="M1 1h6v6H1zM3 15l4-7 4 7z" /><circle cx="12.500" cy="6" r="2.700" /></Svg></Cell>
      <Cell $w={28}><Svg w={18} h={18}><circle cx="9" cy="9" r="8" fill="#0a5fb8" stroke="#1e90ff" strokeWidth="1.600" /><path d="M7 12l7-5" stroke="#7cc4ff" strokeWidth="1.500" /></Svg></Cell>
      <Cell $w={45}>
        <Svg w={13} h={14}><path d="M3 1h7v4H3zM1 5h11v4H1z" stroke={g} strokeWidth="1.500" /><path d="M2 10.500h9l-1 2.500H3z" fill="#4c4c4c" stroke="#f58a33" strokeWidth="1.400" /></Svg>
        <Svg><rect x="0" y="0" width="11" height="9" rx="3" fill="#dcdcdc" /><path d="M3 4l2-3M6 5l3-3" stroke="#333" /><path d="M6 4h5l3 3v6H6z" fill="#7fb0f5" /><path d="M0 8h6v6H0z" fill="#f2e04a" /><path d="M7 12l3 3 6-7" stroke="#3fb63a" strokeWidth="2.400" /></Svg>
      </Cell><Spacer $w={1} />
      <Cell $w={51}>
        <Svg><rect x=".5" y="2.500" width="15" height="11" stroke={g} strokeWidth="1.200" /><path d="M9 5h4v4zM3 7v4h4z" fill={g} /></Svg>
        <Svg w={15} h={14}><path d="M0 1.500h15M0 7h15M0 12.500h15" stroke={g} strokeWidth="1.800" /></Svg>
      </Cell>
    </Status>
  );
};

const OVALS = [
  [1000, 20, 14, 30, 20], [1035, 8, 10, 26, -15], [1065, 20, 9, 30, 10], [1090, 5, 12, 30, 30], [1125, 12, 9, 25, 10], [1150, 18, 8, 30, -8], [1178, 15, 10, 30, 8],
  [1222, 22, 9, 18, 0], [1240, 0, 10, 22, -10], [1265, 18, 12, 34, 8], [1290, 2, 14, 22, -20], [1324, 12, 16, 36, 12], [1355, 30, 14, 16, 0], [1395, 4, 23, 36, 5],
  [1443, 20, 22, 32, 28], [1492, -2, 26, 26, -8], [1536, 24, 26, 34, 20], [1610, 34, 26, 20, 0], [1705, 6, 54, 44, 10], [1850, 16, 60, 40, 0],
];
const TaskBar = () => (
  <Taskbar>
    <Wallpaper width="1920" height="28">
      <rect x="960" y="-4" width="230" height="38" fill="#4a7cc4" opacity=".6" />
      <rect x="1190" y="-4" width="330" height="38" fill="#1f57a8" opacity=".5" />
      {OVALS.map(([x, y, rx, ry, a], i) => <ellipse key={i} cx={x} cy={y} rx={rx} ry={ry} transform={`rotate(${a} ${x} ${y})`} fill={x > 1690 ? '#34609f' : '#5c8bd2'} opacity={x < 1190 ? 0.5 : 0.85} />)}
    </Wallpaper>
    <Orb>
      <Svg w={36} h={29}><g transform="translate(0 -4)"><circle cx="18" cy="18" r="17.500" fill="url(#orb)" stroke="#9fc0dc" strokeOpacity=".7" /><path d="M9 9q4-3 9-1l-2 8q-5-2-9 0z" fill="#e8562a" /><path d="M19.500 9q5 2 10 0l-2.500 8q-5 2-9.500 0z" fill="#8cc63e" /><path d="M7 18q5-2 9 0l-2 8q-5-2-9 0z" fill="#3fa4e6" /><path d="M17.500 19q4 2 9 0l-2 8q-5 2-9 0z" fill="#fbc21d" /><path d="M3 12a16 14 0 0 1 30 0q-15-5-30 0z" fill="#fff" opacity=".3" /></g></Svg>
    </Orb>
    <TaskButton $open><Svg w={18} h={16}><path d="M1 2h5l1 2h9v10H1z" fill="#f3d97a" stroke="#b89032" strokeWidth=".7" /><path d="M6 1l9 1v5H6z" fill="#e9f6e0" /><path d="M3 8h14v7H14v-4H7v4H3z" fill="#7cc4e8" stroke="#3c86b8" strokeWidth=".6" /></Svg></TaskButton>
    <TaskButton><Svg><circle cx="8" cy="8" r="8" fill="#fbc116" /><path d="M1.100 4A8 8 0 0 1 14.900 4H8L5 9.500z" fill="#e33b2e" /><path d="M1.100 4A8 8 0 0 0 8 16l3.500-6L8 8.500 5 9.500z" fill="#2da94f" /><circle cx="8" cy="8" r="3.700" fill="#fff" /><circle cx="8" cy="8" r="2.900" fill="#4285f4" /></Svg></TaskButton>
    <TaskButton><Svg><circle cx="7.500" cy="8.500" r="7.500" fill="#64b82e" /><circle cx="7.500" cy="9" r="5" fill="#f4fbe8" /><circle cx="7.500" cy="9" r="3" fill="#64b82e" /><path d="M8 8l4-7M9 8l6-7M10 8l6-4" stroke="#f4fbe8" strokeWidth="1.600" /></Svg></TaskButton>
    <TaskButton><Svg><rect x="0" y="0" width="16" height="16" rx="1" fill="#f2a61c" /><path d="M7 2h8v12H7z" fill="#fde9b0" /><rect x="1" y="1" width="11" height="14" fill="#f5b531" stroke="#b86e08" strokeWidth=".6" /><ellipse cx="7" cy="8" rx="3.200" ry="4.500" stroke="#6e3d02" strokeWidth="2" /></Svg></TaskButton>
    <TaskButton><Svg w={13} h={16}><rect x="1" y="0" width="11" height="16" rx="1" fill="#8fc4ea" stroke="#3f7fb5" /><rect x="3" y="2" width="7" height="4" fill="#eef9ff" /><path d="M3 8.500h7M3 11h7M3 13.500h7" stroke="#fff" strokeWidth="1.500" strokeDasharray="1.800 .8" /><rect x="8" y="10" width="2.500" height="4.500" fill="#f39b3a" /></Svg></TaskButton>
    <TaskButton $open><Svg><ellipse cx="7" cy="9" rx="7" ry="6" fill="#e8f2fa" stroke="#7aa" strokeWidth=".6" /><circle cx="3.500" cy="9" r="1.500" fill="#e33" /><circle cx="6" cy="6" r="1.500" fill="#3a3" /><circle cx="10" cy="7" r="1.500" fill="#39c" /><circle cx="6" cy="12" r="1.500" fill="#e8b020" /><path d="M12 1h3l-.5 14h-2z" fill="#d9822b" /></Svg></TaskButton>
    <TaskButton $open><Svg><path d="M8 0a8 8 0 1 1-4 14.800L.5 16l1-4A8 8 0 0 1 8 0z" fill="#fff" stroke="#2a7bf0" strokeWidth=".7" /><text x="8" y="10" textAnchor="middle" fontFamily="Liberation Sans, sans-serif" fontWeight="700" fontSize="5.500" letterSpacing="0" fill="#0a6bf0">Zalo</text></Svg></TaskButton>
    <TaskButton $open $active><Svg><rect width="16" height="16" fill="#fbe3e0" /><path d="M1.500 15L6 1h4l4.500 14h-3.500l-1-3.500H6L5 15zM7 9h2.300L8 4z" fill="#b3202a" /></Svg></TaskButton>
    <TaskButton $open><Svg><rect x="1" y="0" width="15" height="16" rx="1" fill="#e9f5e4" stroke="#5a9a4a" /><path d="M10 3h5M10 6h5M10 9h5M10 12h5" stroke="#8fbf80" /><path d="M2 3l3-.5L7 6l2-4h3L8.500 8l3.500 6H9L7 10l-2.500 4H2l3.500-6z" fill="#2f8a2c" /></Svg></TaskButton>
    <Spacer />
    <Tray>
      <TrayText $w={30} $pb={4}>EN</TrayText>
      <Slot $w={10}><Svg w={8} h={4}><path d="M4 0l4 4H0z" fill="#fff" /></Svg></Slot>
      <Spacer $w={12} />
      <Svg><rect width="16" height="16" rx="1" fill="#cfdcff" /><rect x="1" y="1" width="14" height="14" fill="#8a9de8" opacity=".5" /><path d="M11.500 4.500Q5 2.500 5 8t6.500 3.500M5 8h6" stroke="#3c4fb5" strokeWidth="2" /></Svg>
      <Spacer $w={8} />
      <Svg><path d="M1.500 0v16" stroke="#fff" strokeWidth="1.500" /><path d="M2 1h4q2 2 6 1v7q-4 1-6-1H2z" fill="#f4f4f4" /><circle cx="11" cy="11" r="4.500" fill="#d8261c" /><path d="M9 9l4 4M13 9l-4 4" stroke="#fff" strokeWidth="1.500" /></Svg>
      <Spacer $w={9} />
      <Svg><rect x="4" y="4" width="11" height="8" fill="#27476f" stroke="#fff" strokeWidth="1.300" /><path d="M9.500 12v2.500M6 14.700h7M1 2v3h3V2M2.500 0v2M2.500 5v8H6" stroke="#fff" strokeWidth="1.300" /></Svg>
      <Spacer $w={8} />
      <Svg><path d="M1 5.500h3L7.500 2v12L4 10.500H1z" fill="#fff" /><path d="M9.500 5.500q2 2.500 0 5M11.500 3.500q3.500 4.500 0 9M13.500 2q4 6 0 12" stroke="#fff" /></Svg>
      <Spacer $w={20} />
      <TrayText $w={59} $pt={2}>9:23 AM</TrayText>
      <ShowDesktop />
    </Tray>
    <Spacer $w={1} />
  </Taskbar>
);

export default function App() {
  return (
    <Screen>
      <Global />
      <Defs />
      <Top />
      <Tabs>
        {TABS.map(([t, w], i) => <Tab key={t} $w={w} $on={i === 0}>{t}</Tab>)}
        <Spacer $w={19} />
        <Slot $w={14} $h={19}><Svg w={14} h={9}><rect x="0" y="0" width="14" height="9" rx="2" fill="#e8e8ee" stroke="#333" strokeWidth=".6" /><path d="M4 6l3-3 3 3z" fill="#222" /></Svg></Slot>
        <Slot $w={14} $h={19}><Caret /></Slot>
      </Tabs>
      <Ribbon>
        <DrawPanel /><ModifyPanel /><AnnotationPanel /><LayersPanel /><BlockPanel /><PropertiesPanel />
        <GroupsPanel /><UtilitiesPanel /><ClipboardPanel /><ViewPanel />
      </Ribbon>
      <DocTabs>
        <DocTab $w={140} $pl={15}>Start</DocTab>
        <DocTab $w={161} $pl={12} $on><span>3-TMB CHIA CONG*</span><Svg w={8} h={8}><path d="M1 1l6 6M7 1L1 7" stroke="#333" strokeWidth="1.700" /></Svg></DocTab>
        <PlusTab $m="4px 0 0 11px"><Svg w={9} h={9}><path d="M4.500 0v9M0 4.500h9" stroke="#c4c4c4" strokeWidth="2" /></Svg></PlusTab>
      </DocTabs>
      <Canvas>
        <Drawing />
        <ViewLabel>[−][Top][2D Wireframe]</ViewLabel>
        <Frame><FrameLabel>D4302</FrameLabel></Frame>
        <Wcs>WCS<Svg w={8} h={5}><path d="M0 .5h8L4 4.500z" stroke="#dfe0e8" /></Svg></Wcs>
        <NavBar><NavIcons /></NavBar>
        <EdgeStrip />
        <CommandBar>
          <CommandGrip>
            <Svg w={6} h={18}><path d="M1 0v18M4 0v18" stroke="#a8a8a8" strokeWidth="2" strokeDasharray="2 1" /></Svg>
            <Svg w={12} h={10}><path d="M1 1l7 8M8 1L1 9" stroke="#d4d4d4" strokeWidth="1.900" /></Svg>
            <Svg><path d="M2 2l4 0 1 3 7 7-2 2-7-7-4-1V3l2 2 2-1z" fill="#555" stroke="#ddd" /></Svg>
          </CommandGrip>
          <CommandInput>
            <Svg w={15} h={14}><rect x=".5" y=".5" width="14" height="13" rx="1" fill="#aab4c2" stroke="#767f8c" /><path d="M3 4l3 3-3 3M7 10.500h5" stroke="#222" strokeWidth="1.300" /></Svg>
            <Caret $c="#555" $ml={4} /><Spacer $w={8} />Type a command<Spacer /><Svg w={7} h={4}><path d="M3.500 0L7 4H0z" fill="#222" /></Svg>
          </CommandInput>
        </CommandBar>
      </Canvas>
      <Bottom>
        <LayoutTab $w={66} $on>Model</LayoutTab>
        <LayoutTab $w={73}>Layout1</LayoutTab>
        <LayoutTab $w={73}>Layout2</LayoutTab>
        <PlusTab $m="0 0 0 7px" $h={16} $r="9px 3px 9px 3px"><Svg w={9} h={9}><path d="M4.500 0v9M0 4.500h9" stroke="#c4c4c4" strokeWidth="2" /></Svg></PlusTab>
        <Spacer />
        <StatusBar />
      </Bottom>
      <TaskBar />
    </Screen>
  );
}
